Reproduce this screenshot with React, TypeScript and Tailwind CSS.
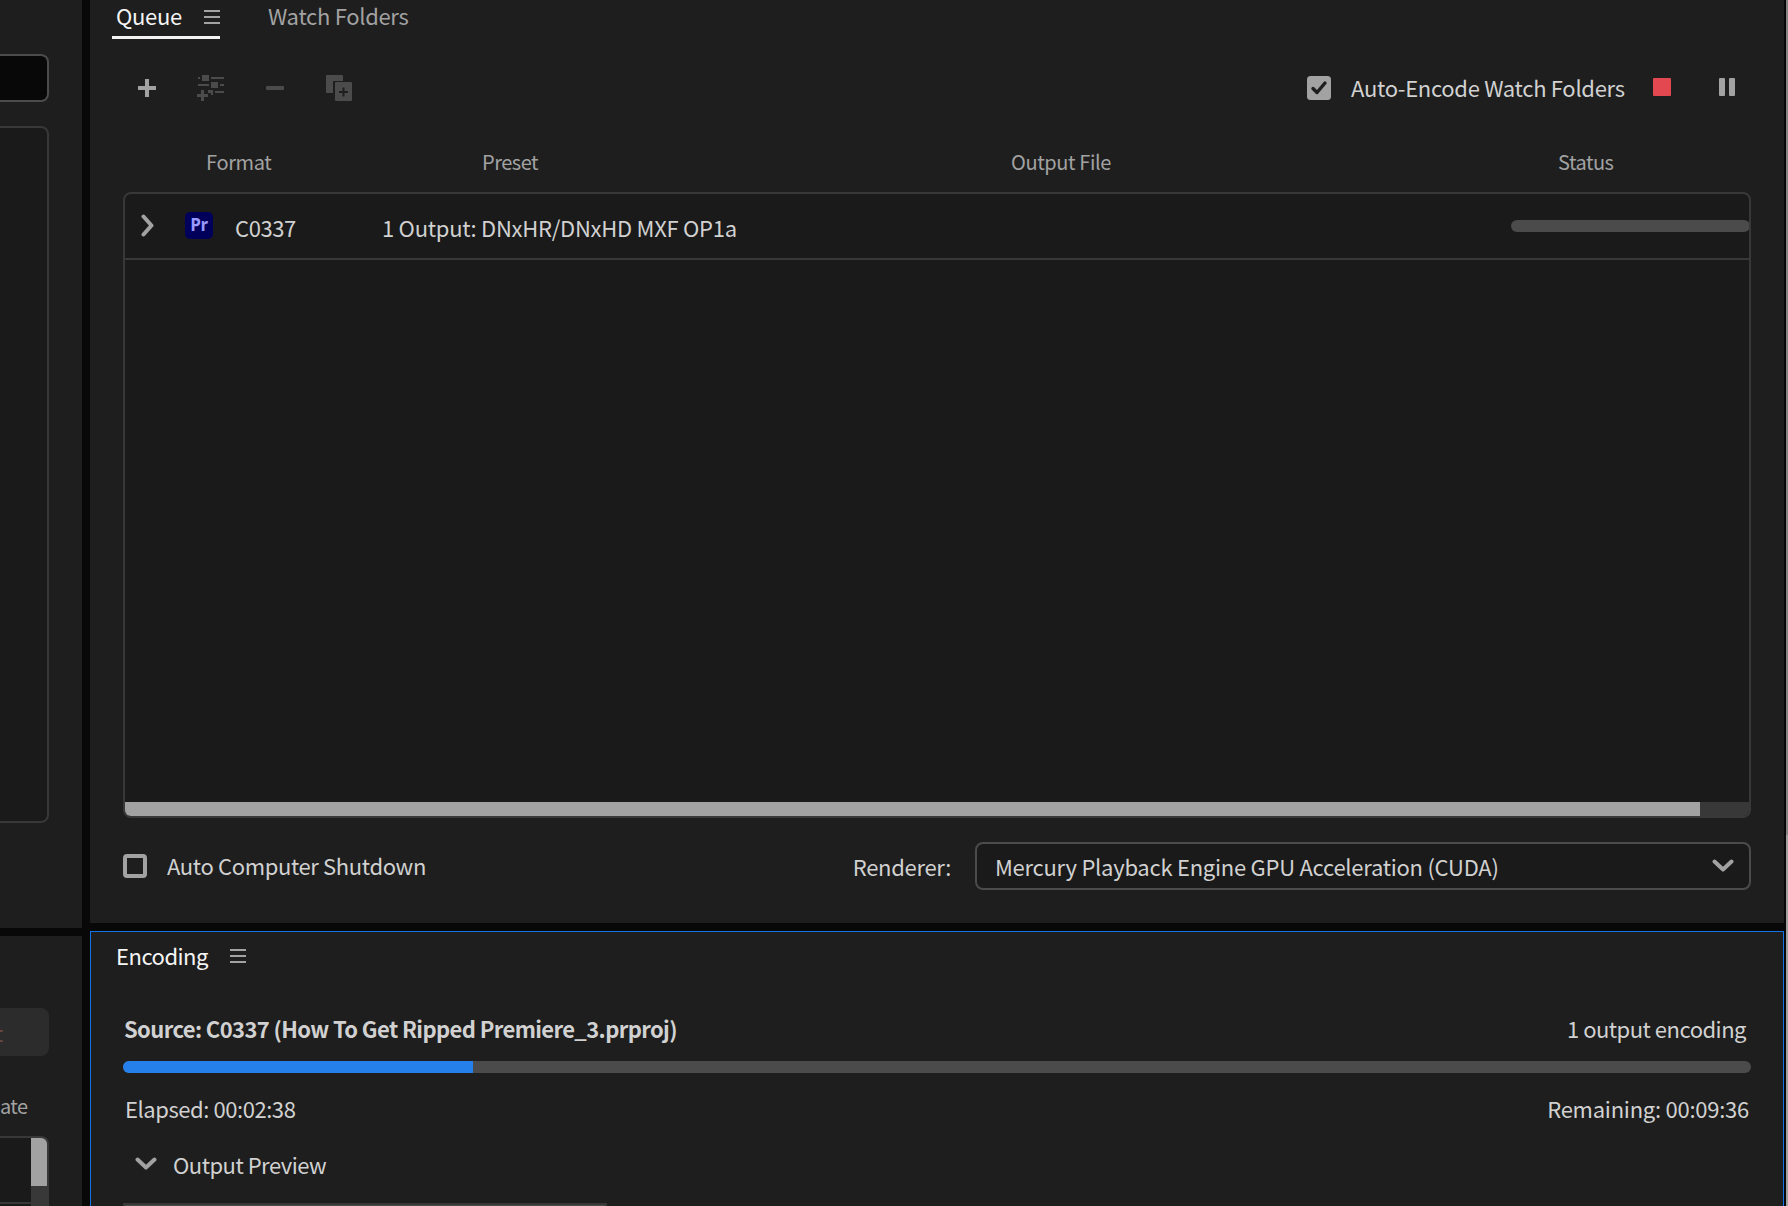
import type { ReactNode } from "react";
import { clsx } from "clsx";

interface LabelProps {
  children: ReactNode;
  className?: string;
}

// single line of UI text, 32px tall
function Label({ children, className }: LabelProps) {
  return (
    <span className={clsx("block h-8 leading-8 whitespace-pre", className)}>
      {children}
    </span>
  );
}

function MenuIcon() {
  return (
    <svg width="16" height="14" viewBox="0 0 16 14" fill="#a2a2a2">
      <path d="M0 0h16v2H0zM0 6h16v2H0zM0 12h16v2H0z" />
    </svg>
  );
}

function ChevronDown({ className }: { className?: string }) {
  return (
    <svg
      className={className}
      width="22"
      height="14"
      viewBox="0 0 22 14"
      fill="none"
      stroke="#a2a2a2"
      strokeWidth="4"
      strokeLinecap="round"
      strokeLinejoin="round"
    >
      <path d="M2.5 2.5 11 10.5 19.5 2.5" />
    </svg>
  );
}

function Toolbar() {
  return (
    <div className="flex h-[26px] items-center pl-[15px] pr-4">
      <svg width="18" height="18" viewBox="0 0 18 18" fill="#a2a2a2">
        <path d="M7 0h4v7h7v4h-7v7H7v-7H0V7h7z" />
      </svg>
      <svg className="ml-[41px]" width="27" height="26" viewBox="0 0 27 26" fill="#4b4b4b">
        <path d="M1 2h2v2H1zM5 0h7v6H5zM14 2h13v2H14zM1 9h11v2H1zM14 7h7v6h-7zM23 9h4v2h-4zM18 16h9v2h-9zM11 15h5v5h-2v-2h-3zM4 15h3v4h4v3H7v4H4v-4H0v-3h4z" />
      </svg>
      <svg className="ml-[42px]" width="18" height="4" viewBox="0 0 18 4" fill="#4b4b4b">
        <rect width="18" height="4" rx="1" />
      </svg>
      <svg className="ml-[42px]" width="26" height="26" viewBox="0 0 26 26" fill="#4b4b4b">
        <path d="M1 0h15a1 1 0 0 1 1 1v5H8a1 1 0 0 0-1 1v11H1a1 1 0 0 1-1-1V1a1 1 0 0 1 1-1z" />
        <rect x="9" y="7" width="17" height="19" rx="1" />
        <path d="M16.500 12.500h2v3.500h3.500v2h-3.500v3.500h-2v-3.500h-3.500v-2h3.500z" fill="#1e1e1e" />
      </svg>
      <div className="ml-auto flex items-center">
        <svg width="24" height="24" viewBox="0 0 24 24" fill="none">
          <rect width="24" height="24" rx="3.500" fill="#a2a2a2" />
          <path d="M6 12.500 10 16.500 18 7" stroke="#1e1e1e" strokeWidth="3.400" strokeLinecap="round" strokeLinejoin="round" />
        </svg>
        <Label className="mb-[2px] ml-[20px] w-[302px] tracking-[-0.3px] text-[#d1d1d1]">Auto-Encode Watch Folders</Label>
        <div className="mb-[2px] size-[18px] rounded-[1px] bg-[#e34850]" />
        <div className="mb-[2px] ml-12 flex gap-1">
          <div className="h-[18px] w-1.5 rounded-[1px] bg-[#a2a2a2]" />
          <div className="h-[18px] w-1.5 rounded-[1px] bg-[#a2a2a2]" />
        </div>
      </div>
    </div>
  );
}

function QueueList() {
  return (
    <div className="flex h-[626px] flex-col overflow-hidden rounded-lg border-2 border-[#383838] bg-[#1a1a1a]">
      <div className="flex h-[66px] shrink-0 items-center border-b-2 border-[#383838]">
        <svg className="mb-[2px] ml-4" width="13" height="23" viewBox="0 0 13 23" fill="none" stroke="#a2a2a2" strokeWidth="4" strokeLinecap="round" strokeLinejoin="round">
          <path d="M2.500 2.500 10.500 11.500 2.500 20.500" />
        </svg>
        <div className="mb-px ml-[31px] flex h-[27px] w-7 items-center justify-center rounded-[5px] bg-[#00005b] pb-[2px] font-['Open_Sans'] text-[17px] font-bold tracking-[-0.5px] text-[#9999ff]">
          Pr
        </div>
        <Label className="mt-[2px] ml-[22px] w-[147px] tracking-[-0.4px] text-[#d1d1d1]">C0337</Label>
        <Label className="mt-[2px] tracking-[-0.27px] text-[#d1d1d1]">1 Output: DNxHR/DNxHD MXF OP1a</Label>
        <div className="-mr-px ml-auto h-3 w-[239px] rounded-full bg-[#4b4b4b]" />
      </div>
      <div className="flex-1" />
      <div className="h-[14px] bg-[#383838]">
        <div className="h-full w-[1575px] bg-[#a2a2a2]" />
      </div>
    </div>
  );
}

function QueuePanel() {
  return (
    <section className="h-[923px] bg-[#1e1e1e] pr-[33px] pl-[33px]">
      <div className="-ml-[11px] flex h-[39px] items-start">
        <div className="flex h-[39px] w-[108px] items-start border-b-[3px] border-[#f2f2f2]">
          <Label className="-mt-px ml-[4px] w-[88px] tracking-[-0.3px] text-[#f5f5f5]">Queue</Label>
          <div className="pt-[10px]">
            <MenuIcon />
          </div>
        </div>
        <Label className="-mt-px ml-[48px] tracking-[-0.3px] text-[#a2a2a2]">Watch Folders</Label>
      </div>
      <div className="mt-9">
        <Toolbar />
      </div>
      <div className="mt-[45px] flex h-[46px] pl-[83px] text-[20px] text-[#a2a2a2]">
        <Label className="w-[276px] tracking-[-0.35px]">Format</Label>
        <Label className="w-[529px] tracking-[-0.5px]">Preset</Label>
        <Label className="w-[547px] tracking-[-0.4px]">Output File</Label>
        <Label className="tracking-[-0.5px]">Status</Label>
      </div>
      <QueueList />
      <div className="mt-6 flex h-12 items-center text-[#d1d1d1]">
        <div className="size-6 rounded-[4px] border-4 border-[#a2a2a2]" />
        <Label className="mb-[2px] ml-5 tracking-[-0.36px]">Auto Computer Shutdown</Label>
        <Label className="mr-[24px] ml-auto tracking-[-0.3px]">Renderer:</Label>
        <div className="flex h-12 w-[776px] items-center justify-between rounded-lg border-2 border-[#4b4b4b] bg-[#1a1a1a] pr-[15px] pl-[18px]">
          <Label className="tracking-[-0.26px]">Mercury Playback Engine GPU Acceleration (CUDA)</Label>
          <ChevronDown />
        </div>
      </div>
    </section>
  );
}

function EncodingPanel() {
  return (
    <section className="flex-1 overflow-hidden border border-b-0 border-[#1473e6] bg-[#1e1e1e] pr-8 pl-8 text-[#d1d1d1]">
      <div className="-ml-[7px] flex h-12 items-center">
        <Label className="mb-[3px] w-[114px] tracking-[-0.5px] text-[#f5f5f5]">Encoding</Label>
        <MenuIcon />
      </div>
      <div className="mt-8 flex h-[49px] justify-between pr-[5px] pl-px">
        <Label className="font-bold tracking-[-0.61px]">Source: C0337 (How To Get Ripped Premiere_3.prproj)</Label>
        <Label className="tracking-[-0.5px]">1 output encoding</Label>
      </div>
      <div className="h-3 overflow-hidden rounded-full bg-[#4b4b4b]">
        <div className="h-full w-[350px] bg-[#2680eb]" />
      </div>
      <div className="mt-[19px] flex h-14 justify-between pr-[2px] pl-[2px]">
        <Label className="tracking-[-0.44px]">Elapsed: 00:02:38</Label>
        <Label className="tracking-[-0.25px]">Remaining: 00:09:36</Label>
      </div>
      <div className="flex h-[55px] pl-3">
        <ChevronDown className="mt-[9px]" />
        <Label className="ml-4 tracking-[-0.5px]">Output Preview</Label>
      </div>
      <div className="h-10 w-[484px] border-2 border-[#383838] bg-[#4b4b4b]" />
    </section>
  );
}

function SidePanels() {
  return (
    <aside className="flex h-full w-[82px] shrink-0 flex-col gap-2">
      <section className="h-[928px] bg-[#1e1e1e] pt-[54px]">
        <div className="h-12 w-[49px] rounded-r-lg border-2 border-l-0 border-[#4b4b4b] bg-[#080808]" />
        <div className="mt-6 h-[697px] w-[49px] rounded-r-lg border-2 border-l-0 border-[#383838] bg-[#1a1a1a]" />
      </section>
      <section className="flex-1 overflow-hidden bg-[#1e1e1e] pt-[72px]">
        <div className="flex h-12 w-[49px] items-center overflow-hidden rounded-r-lg bg-[#2c2c2c]">
          <Label className="-ml-[5px] text-[#6e4a45]">t</Label>
        </div>
        <Label className="mt-[34px] tracking-[-0.6px] text-[20px] text-[#a2a2a2]">ate</Label>
        <div className="mt-[14px] flex h-20 w-[49px] rounded-tr-lg border-2 border-l-0 border-[#383838] bg-[#1a1a1a]">
          <div className="h-[66px] w-[31px] border-b-2 border-[#383838]" />
          <div className="w-4 bg-[#383838]">
            <div className="h-12 rounded-tr-md bg-[#a2a2a2]" />
          </div>
        </div>
      </section>
    </aside>
  );
}

export default function App() {
  return (
    <div className="flex h-[1206px] w-[1788px] overflow-hidden bg-[#080808] font-['Noto_Sans_CJK_SC','Noto_Sans',sans-serif] text-[22px]">
      <SidePanels />
      <main className="ml-2 flex w-[1694px] shrink-0 flex-col gap-2">
        <QueuePanel />
        <EncodingPanel />
      </main>
      <div className="ml-[2px] flex w-[2px] flex-col">
        <div className="h-[835px] bg-[#858585]" />
        <div className="flex-1 bg-[#a0a0a0]" />
      </div>
    </div>
  );
}
